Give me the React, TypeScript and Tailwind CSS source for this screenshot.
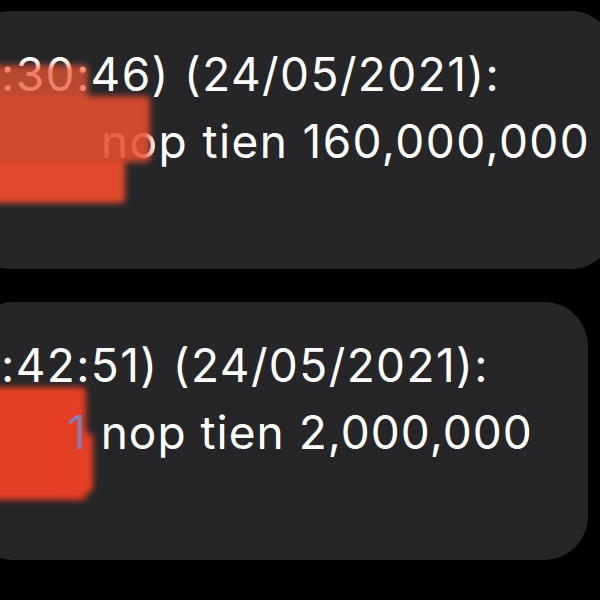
export default function App() {
  return (
    <div
      className="w-[600px] h-[600px] bg-black overflow-hidden flex flex-col pt-[11px] gap-[33px] text-white"
      style={{ fontFamily: 'Inter, "Noto Sans", sans-serif' }}
    >
      {/* first message */}
      <div className="relative h-[258px] w-[642px] -ml-[30px] shrink-0 rounded-[40px] bg-[#262628] pl-[31px] pt-[30px] text-[46px] leading-[67px] tracking-[1.4px]">
        <p className="relative whitespace-nowrap">:30:46) (24/05/2021):</p>
        <p className="relative whitespace-nowrap pl-[100px]">nop tien 160,000,000</p>
        <div className="absolute left-[18px] top-[54px] w-[100px] h-[36px] bg-[#ea5534] opacity-75 blur-[3px] rounded-sm" />
        <div className="absolute left-[18px] top-[85px] w-[162px] h-[66px] bg-[#e94e2f] opacity-[0.88] blur-[3px] rounded-sm" />
        <div className="absolute left-[18px] top-[147px] w-[137px] h-[45px] bg-[#e24a2b] blur-[3px] rounded-sm" />
      </div>

      {/* second message */}
      <div className="relative h-[258px] w-[618px] -ml-[30px] shrink-0 rounded-[44px] bg-[#262628] pl-[31px] pt-[30px] text-[46px] leading-[67px] tracking-[1.4px]">
        <p className="relative whitespace-nowrap">:42:51) (24/05/2021):</p>
        <div className="absolute left-[18px] top-[85px] w-[98px] h-[113px] bg-[#e63e23] blur-[3px] rounded-sm" />
        <div className="absolute left-[92px] top-[131px] w-[31px] h-[60px] bg-[#e43f24] blur-[3px] rounded-md" />
        <p className="relative whitespace-nowrap pl-[66px] tracking-[1px]">
          <span className="text-[#6f8fe0] opacity-75">1</span> nop tien 2,000,000
        </p>
      </div>
    </div>
  );
}
